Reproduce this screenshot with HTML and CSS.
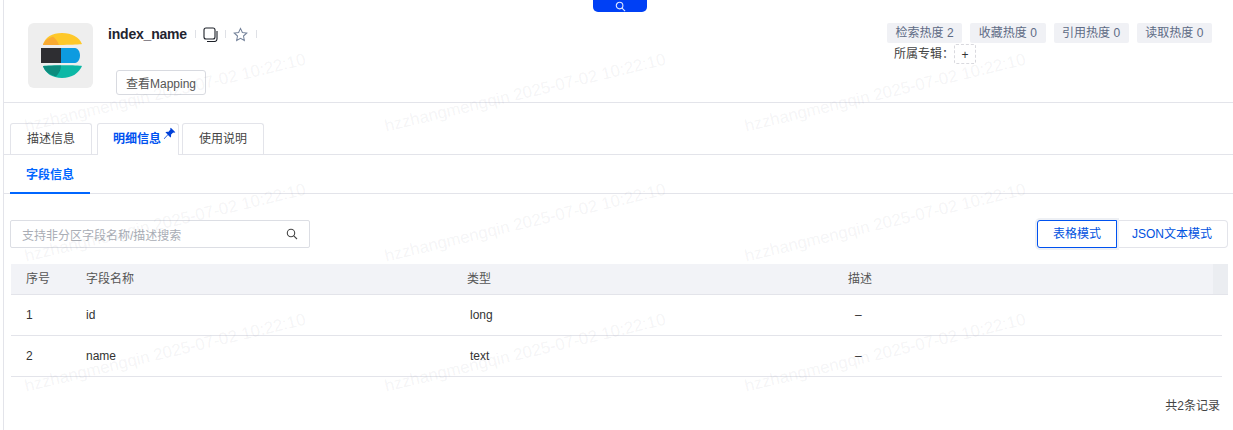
FILE: index.html
```html
<!DOCTYPE html>
<html lang="zh">
<head>
<meta charset="utf-8">
<title>index_name</title>
<link rel="stylesheet" href="styles.css">
</head>
<body>
<div class="top-search">
  <svg class="top-search-icon" viewBox="0 0 12 12"><circle cx="5" cy="5" r="3.6"/><path d="M7.7 7.7 11 11"/></svg>
</div>
<div class="page">
  <header class="head">
    <div class="logo">
      <svg viewBox="0 0 65 65" width="65" height="65">
        <defs><filter id="soft" x="-5%" y="-5%" width="110%" height="110%"><feGaussianBlur stdDeviation="0.4"/></filter></defs>
        <g filter="url(#soft)">
          <path d="M15 22C17 14 24 10 34 10C44 10 51 14 54 21C50 22 22 22 15 22Z" fill="#fec82c"/>
          <path d="M15 22C16 18 20 15 25 13.500C28 16 30 19 31 22Z" fill="#f9aa33"/>
          <rect x="13" y="25" width="20" height="15" fill="#2f2f33"/>
          <path d="M33 25H47C50 25 52 29 52 32.500C52 36 50 40 47 40H33Z" fill="#0f9be0"/>
          <path d="M15 43C22 42 50 42 54 43C51 50 44 55 34 55C24 55 17 50 15 43Z" fill="#10b8a6"/>
          <path d="M15 43 33 42.500C33 47 31 50 28 53.500C22 52 17 49 15 43Z" fill="#078c7e"/>
        </g>
      </svg>
    </div>
    <div class="head-main">
      <div class="title-row">
        <h1 class="title">index_name</h1>
        <span class="sep"></span>
        <svg class="icon-copy" viewBox="0 0 15 15"><rect x="1" y="1" width="11" height="11" rx="2"/><path d="M14 4v8a2.500 2.500 0 0 1-2.500 2.500H4"/></svg>
        <span class="sep"></span>
        <svg class="icon-star" viewBox="0 0 16 16"><path d="M8 1.500 10 5.800 14.700 6.400 11.200 9.600 12.100 14.300 8 12 3.900 14.300 4.800 9.600 1.300 6.400 6 5.800Z"/></svg>
        <span class="sep"></span>
      </div>
      <button class="mapping-btn" type="button">查看Mapping</button>
    </div>
    <div class="head-side">
      <div class="tags">
        <span class="tag">检索热度 2</span>
        <span class="tag">收藏热度 0</span>
        <span class="tag">引用热度 0</span>
        <span class="tag">读取热度 0</span>
      </div>
      <div class="album">
        <span class="album-label">所属专辑：</span>
        <span class="album-add">+</span>
      </div>
    </div>
  </header>

  <nav class="tabs">
    <span class="tab">描述信息</span>
    <span class="tab tab-active">明细信息
      <svg class="pin" viewBox="0 0 12 12"><path d="M7.200.6 11.400 4.800 10.300 5.400 9.400 5 7.300 7.100C7.700 8.100 7.500 9 6.900 9.600L4.600 7.300 1.200 11 .8 10.600 4.300 6.900 2.200 4.900C2.800 4.300 3.800 4.100 4.800 4.500L6.900 2.400 6.600 1.600Z"/></svg>
    </span>
    <span class="tab">使用说明</span>
  </nav>

  <div class="subtabs"><span class="subtab">字段信息</span></div>

  <div class="toolbar">
    <div class="search">
      <span class="search-text">支持非分区字段名称/描述搜索</span>
      <svg class="search-icon" viewBox="0 0 12 12"><circle cx="5" cy="5" r="3.700"/><path d="M7.800 7.800 11 11"/></svg>
    </div>
    <div class="toggle">
      <span class="toggle-btn toggle-active">表格模式</span>
      <span class="toggle-btn toggle-rest">JSON文本模式</span>
    </div>
  </div>

  <div class="table">
    <div class="thead">
      <span class="th">序号</span>
      <span class="th">字段名称</span>
      <span class="th">类型</span>
      <span class="th">描述</span>
      <span class="gutter"></span>
    </div>
    <div class="tr">
      <span class="td">1</span><span class="td">id</span><span class="td td-type">long</span><span class="td td-desc">–</span>
    </div>
    <div class="tr">
      <span class="td">2</span><span class="td">name</span><span class="td td-type">text</span><span class="td td-desc">–</span>
    </div>
  </div>

  <div class="total">共2条记录</div>
</div>

<div class="watermarks" aria-hidden="true">
  <span class="wm">hzzhangmengqin 2025-07-02 10:22:10</span><span class="wm">hzzhangmengqin 2025-07-02 10:22:10</span><span class="wm">hzzhangmengqin 2025-07-02 10:22:10</span>
  <span class="wm">hzzhangmengqin 2025-07-02 10:22:10</span><span class="wm">hzzhangmengqin 2025-07-02 10:22:10</span><span class="wm">hzzhangmengqin 2025-07-02 10:22:10</span>
  <span class="wm">hzzhangmengqin 2025-07-02 10:22:10</span><span class="wm">hzzhangmengqin 2025-07-02 10:22:10</span><span class="wm">hzzhangmengqin 2025-07-02 10:22:10</span>
</div>
</body>
</html>
```
FILE: styles.css
```css
* { box-sizing: border-box; }
html, body { margin: 0; height: 430px; overflow: hidden; background: #fff; }
body {
  position: relative;
  font-family: "Liberation Sans", "Noto Sans CJK SC", sans-serif;
  font-size: 12px;
  color: #333;
}
.top-search {
  position: absolute; left: 593px; top: 0;
  width: 54px; height: 12px;
  background: #0040f5;
  border-radius: 0 0 5px 5px;
  display: flex; align-items: center; justify-content: center;
}
.top-search-icon { width: 11px; height: 11px; fill: none; stroke: #dfe8ff; stroke-width: 1.2; }

.page {
  margin-left: 3px;
  height: 430px;
  border-left: 1px solid #e3e4ea;
}
.head {
  height: 103px;
  border-bottom: 1px solid #e3e4ea;
  padding: 23px 21px 0 24px;
  display: flex;
}
.logo {
  width: 65px; height: 65px;
  background: #eeeeee;
  border-radius: 6px;
  overflow: hidden;
}
.head-main { margin-left: 15px; flex: 1; }
.title-row { display: flex; align-items: center; height: 22px; }
.title { margin: 0; font-size: 14px; font-weight: 700; letter-spacing: -0.2px; color: #1f2430; line-height: 22px; width: 87px; }
.sep { width: 1px; height: 8px; background: #dfe1e6; }
.icon-copy { width: 15px; height: 15px; margin: 0 7px; fill: none; stroke: #1d2129; stroke-width: 1.1; }
.icon-star { width: 15px; height: 15px; margin: 0 8px 0 7px; fill: none; stroke: #75839b; stroke-width: 1.1; }
.mapping-btn {
  display: block;
  margin: 25px 0 0 8px;
  width: 90px; height: 25px;
  padding: 0;
  background: #fff;
  border: 1px solid #d8dae0;
  border-radius: 3px;
  font: inherit;
  color: #555;
}
.head-side { width: 325px; }
.tags { display: flex; gap: 8px; height: 20px; }
.tag {
  flex: 1; height: 20px;
  background: #f0f1f5;
  border-radius: 2px;
  color: #5e6b85;
  line-height: 20px;
  text-align: center;
}
.album { display: flex; align-items: center; height: 20px; margin-top: 1px; padding-left: 7px; }
.album-label { width: 60px; color: #444; margin-top: -3px; }
.album-add {
  width: 22px; height: 20px;
  border: 1px dashed #d9d9de;
  border-radius: 2px;
  text-align: center;
  line-height: 21px;
  color: #333;
}

.tabs {
  display: flex;
  margin-top: 20px;
  padding-left: 6px;
  height: 32px;
  border-bottom: 1px solid #e3e4ea;
}
.tab {
  position: relative;
  width: 82px; height: 31px;
  margin-right: 5px;
  border: 1px solid #e3e4ea;
  border-bottom: 0;
  border-radius: 3px 3px 0 0;
  text-align: center;
  line-height: 30px;
  color: #444;
  background: #fff;
}
.tab-active {
  height: 32px;
  margin-right: 3px;
  padding-right: 2px;
  color: #0052f0;
  font-weight: 700;
}
.pin { position: absolute; right: 2px; top: 3px; width: 13px; height: 13px; fill: #0040d8; }

.subtabs {
  height: 39px;
  border-bottom: 1px solid #e3e4ea;
  padding-left: 6px;
}
.subtab {
  display: block;
  width: 80px; height: 39px;
  border-bottom: 2px solid #0066ff;
  color: #0066ff;
  font-weight: 700;
  text-align: center;
  line-height: 40px;
}

.toolbar {
  display: flex;
  justify-content: space-between;
  margin-top: 26px;
  padding: 0 5px 0 6px;
  height: 28px;
}
.search {
  width: 300px; height: 28px;
  border: 1px solid #dcdee4;
  border-radius: 2px;
  padding: 0 11px;
  display: flex; align-items: center; justify-content: space-between;
  color: #a9adb5;
}
.search-icon { width: 12px; height: 12px; fill: none; stroke: #444; stroke-width: 1.100; }
.toggle { display: flex; height: 28px; }
.toggle-btn { line-height: 26px; text-align: center; color: #0052e0; background: #fff; }
.toggle-active {
  width: 80px;
  border: 1px solid #0052f0;
  border-radius: 3px 0 0 3px;
  box-shadow: 0 0 0 2px #eef0f4;
  position: relative;
}
.toggle-rest {
  width: 111px;
  border: 1px solid #e3e4ea;
  border-left: 0;
  border-radius: 0 4px 4px 0;
}

.table { margin: 16px 0 0 7px; }
.tr {
  display: grid;
  grid-template-columns: 60px 381px 381px 1fr;
  width: 1211px; height: 41px;
  border-bottom: 1px solid #e3e4ea;
  line-height: 41px;
  color: #333;
}
.thead {
  display: grid;
  grid-template-columns: 60px 381px 381px 1fr 15px;
  width: 1217px; height: 31px;
  background: #f2f3f7;
  border-bottom: 1px solid #e3e4ea;
  color: #555;
  line-height: 30px;
}
.th { padding-left: 15px; }
.gutter { background: #ebedf1; height: 30px; }
.td { padding-left: 15px; }
.td-type { padding-left: 18px; }
.td-desc { padding-left: 22px; }

.total { margin-top: 21px; padding-right: 13px; text-align: right; color: #444; line-height: 16px; }

.watermarks {
  position: absolute; left: 21px; top: 28px;
  display: grid;
  grid-template-columns: repeat(3, 360px);
  grid-auto-rows: 130px;
  pointer-events: none;
}
.wm {
  width: 290px; height: 130px;
  font-size: 16.8px;
  line-height: 130px;
  white-space: nowrap;
  color: rgba(120, 125, 140, 0.085);
  transform: rotate(-13.5deg);
  transform-origin: 50% 50%;
}
```
